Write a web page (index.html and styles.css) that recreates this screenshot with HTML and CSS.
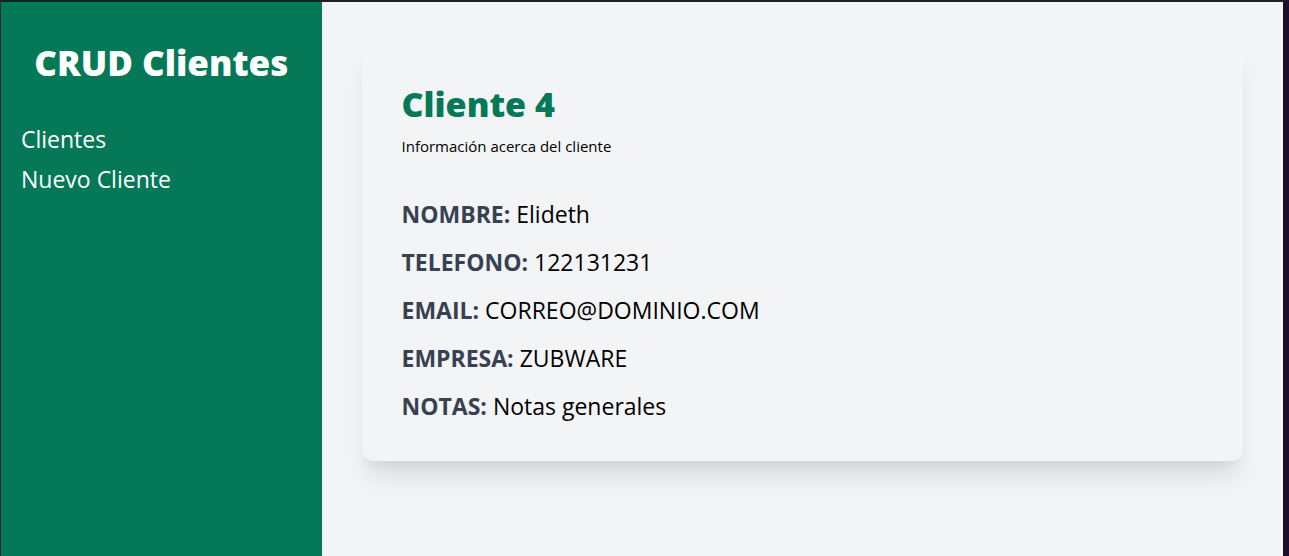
FILE: index.html
```html
<!DOCTYPE html>
<html lang="es">
<head>
<meta charset="utf-8">
<title>CRUD Clientes</title>
<link rel="stylesheet" href="styles.css">
</head>
<body>
<div class="frame">
  <aside class="sidebar">
    <h1 class="brand">CRUD Clientes</h1>
    <nav class="nav">
      <a class="nav-link" href="#">Clientes</a>
      <a class="nav-link" href="#">Nuevo Cliente</a>
    </nav>
  </aside>
  <main class="main">
    <section class="card">
      <h2 class="card-title">Cliente 4</h2>
      <p class="card-sub">Información acerca del cliente</p>
      <div class="rows">
        <p class="row"><span class="label">NOMBRE:</span> Elideth</p>
        <p class="row"><span class="label">TELEFONO:</span> 122131231</p>
        <p class="row"><span class="label">EMAIL:</span> CORREO@DOMINIO.COM</p>
        <p class="row"><span class="label">EMPRESA:</span> ZUBWARE</p>
        <p class="row"><span class="label">NOTAS:</span> Notas generales</p>
      </div>
    </section>
  </main>
</div>
</body>
</html>
```

FILE: styles.css
```css
* { box-sizing: border-box; }
html, body { margin: 0; padding: 0; }
body {
  font-family: "Open Sans", "Noto Sans", sans-serif;
  background: #1b0f2c;
}
.frame {
  display: flex;
  height: 556px;
  border-top: 2px solid #1f1f22;
  border-left: 1px solid #2a2a2e;
  border-right: 6px solid #1b0f2c;
  background: #f3f4f6;
}
.sidebar {
  width: 25%;
  background: #047857;
  padding: 41px 20px 20px;
}
.brand {
  margin: 0;
  color: #fff;
  font-size: 35px;
  line-height: 40px;
  font-weight: 800;
  text-align: center;
}
.nav {
  display: flex;
  flex-direction: column;
  gap: 8px;
  margin-top: 40px;
}
.nav-link {
  color: #fff;
  text-decoration: none;
  font-size: 23px;
  line-height: 32px;
}
.main {
  flex: 1;
  padding: 40px;
}
.card {
  background: #f3f4f6;
  border-radius: 12px;
  padding: 42px 40px 39px;
  box-shadow: 0 20px 25px -5px rgba(0,0,0,0.1), 0 10px 10px -5px rgba(0,0,0,0.04);
}
.card-title {
  margin: 0;
  color: #047857;
  font-size: 34px;
  line-height: 40px;
  font-weight: 800;
}
.card-sub {
  margin: 12px 0 42px;
  font-size: 15px;
  line-height: 20px;
  color: #000;
}
.rows {
  display: flex;
  flex-direction: column;
  gap: 16px;
}
.row {
  margin: 0;
  font-size: 23px;
  line-height: 32px;
  color: #000;
}
.label {
  font-weight: 700;
  color: #374151;
}
```
